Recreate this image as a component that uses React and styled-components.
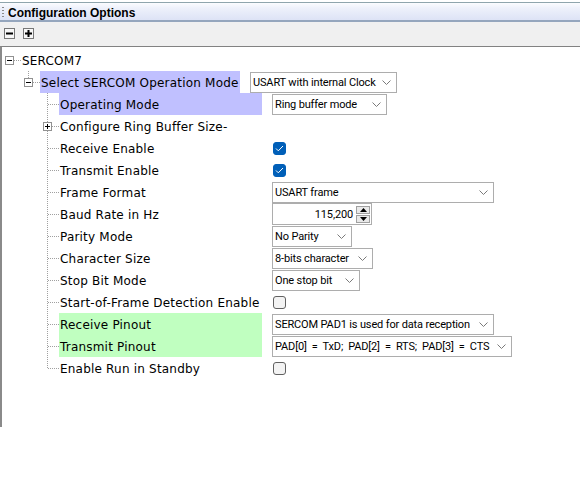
import React from "react";
import styled, { createGlobalStyle } from "styled-components";

const GlobalStyle = createGlobalStyle`
  html, body { margin: 0; padding: 0; background: #ffffff; }
  body { font-family: "DejaVu Sans", sans-serif; }
`;

const Window = styled.div`
  width: 580px;
  height: 500px;
  padding-top: 2px;
  box-sizing: border-box;
  background: #ffffff;
  overflow: hidden;
`;

const TitleBar = styled.div`
  height: 17px;
  border-top: 1px solid #8fa5ad;
  border-bottom: 2px solid #95a6bd;
  background: linear-gradient(#fbfcff 0%, #eef1fb 30%, #dde3f6 100%);
  display: flex;
  align-items: center;
  gap: 4px;
  padding-left: 2px;
`;

const Grip = styled.div`
  width: 2px;
  height: 11px;
  margin-top: 2px;
  background: repeating-linear-gradient(#8a8a8a 0 1px, transparent 1px 3px);
`;

const Title = styled.span`
  font-family: "Liberation Sans", Arial, sans-serif;
  font-weight: bold;
  font-size: 12px;
  line-height: 17px;
  padding-top: 3px;
  color: #000000;
`;

const Toolbar = styled.div`
  height: 24px;
  background: #f0f0f0;
  display: flex;
  align-items: center;
  gap: 8px;
  padding-left: 4px;
  padding-bottom: 1px;
  box-sizing: border-box;
`;

const ToolButton = styled.div`
  width: 11px;
  height: 11px;
  box-sizing: border-box;
  border: 1px solid #777777;
  background: #f7f7f7;
  display: flex;
  align-items: center;
  justify-content: center;
`;

const TreePanel = styled.div`
  height: 381px;
  box-sizing: border-box;
  border-top: 1px solid #828282;
  border-left: 2px solid #8a8a8a;
  background: #ffffff;
  padding-top: 2px;
`;

const Row = styled.div`
  height: 22px;
  display: flex;
  align-items: center;
`;

const GuideCell = styled.svg`
  flex: none;
  display: block;
  width: 19px;
  height: 22px;
`;

const Label = styled.div`
  flex: none;
  height: 22px;
  line-height: 20px;
  padding-top: 2px;
  box-sizing: border-box;
  padding-left: 1px;
  width: ${(p) => (p.$width ? `${p.$width}px` : "auto")};
  background: ${(p) =>
    p.$hl === "blue" ? "#c0c0ff" : p.$hl === "green" ? "#c0ffc0" : "transparent"};
  font-family: "DejaVu Sans", Verdana, sans-serif;
  font-size: 12px;
  letter-spacing: 0.2px;
  color: #000000;
  white-space: nowrap;
`;

const Value = styled.div`
  margin-left: 10px;
  display: flex;
  align-items: center;
`;

const Select = styled.div`
  width: ${(p) => p.$w}px;
  height: 21px;
  box-sizing: border-box;
  border: 1px solid #adadad;
  background: #ffffff;
  display: flex;
  align-items: center;
  justify-content: space-between;
  padding: 0 5px 0 2px;
  font-family: Roboto, "Liberation Sans", sans-serif;
  font-size: 11px;
  letter-spacing: -0.15px;
  word-spacing: ${(p) => (p.$wide ? "2.5px" : "0")};
  color: #000000;
  white-space: nowrap;
`;

const Spinner = styled.div`
  width: 100px;
  height: 22px;
  box-sizing: border-box;
  border: 1px solid #adadad;
  background: #ffffff;
  display: flex;
  align-items: center;
  justify-content: flex-end;
  gap: 3px;
  padding-right: 1px;
  font-family: Roboto, "Liberation Sans", sans-serif;
  font-size: 11px;
  letter-spacing: -0.15px;
  color: #000000;
`;

const SpinButtons = styled.div`
  display: flex;
  flex-direction: column;
  gap: 1px;
`;

const SpinButton = styled.div`
  width: 14px;
  height: 8px;
  box-sizing: border-box;
  border: 1px solid #a0a0a0;
  background: #e9e9e9;
  display: flex;
  align-items: center;
  justify-content: center;
`;

const CheckBox = styled.div`
  width: 13px;
  height: 13px;
  box-sizing: border-box;
  border-radius: 3px;
  border: 1px solid ${(p) => (p.$checked ? "#005fb8" : "#616161")};
  background: ${(p) => (p.$checked ? "#005fb8" : "#f3f3f3")};
  display: flex;
  align-items: center;
  justify-content: center;
  margin-left: 1px;
`;

const LINE = "#a0a0a0";

function Guide({ type }) {
  const dot = { stroke: LINE, strokeWidth: 1, strokeDasharray: "1 1", shapeRendering: "crispEdges" };
  const parts = [];
  if (type === "tee" || type === "teePlus") {
    parts.push(<line key="v" x1="7.5" y1="0" x2="7.5" y2="22" {...dot} />);
  }
  if (type === "elbow") {
    parts.push(<line key="v" x1="7.5" y1="0" x2="7.5" y2="12" {...dot} />);
  }
  if (type === "lastMinus") {
    parts.push(<line key="v" x1="7.5" y1="0" x2="7.5" y2="7" {...dot} />);
  }
  if (type === "tee" || type === "elbow") {
    parts.push(<line key="h" x1="8" y1="11.5" x2="19" y2="11.5" {...dot} />);
  }
  if (type === "teePlus" || type === "lastMinus" || type === "rootMinus") {
    parts.push(<line key="h" x1="12" y1="11.5" x2="19" y2="11.5" {...dot} />);
    parts.push(
      <rect key="b" x="3.5" y="7.5" width="8" height="8" fill="#ffffff" stroke="#919191" strokeWidth="1" shapeRendering="crispEdges" />
    );
    parts.push(<line key="m" x1="5" y1="11.5" x2="10" y2="11.5" stroke="#000000" strokeWidth="1" shapeRendering="crispEdges" />);
    if (type === "teePlus") {
      parts.push(<line key="p" x1="7.5" y1="9" x2="7.5" y2="14" stroke="#000000" strokeWidth="1" shapeRendering="crispEdges" />);
    }
  }
  return (
    <GuideCell viewBox="0 0 19 22" aria-hidden="true">
      {parts}
    </GuideCell>
  );
}

function Chevron() {
  return (
    <svg width="9" height="5" viewBox="0 0 9 5" aria-hidden="true" style={{ flex: "none" }}>
      <polyline points="0.5,0.5 4.5,4.5 8.5,0.5" fill="none" stroke="#7a7a7a" strokeWidth="1" />
    </svg>
  );
}

function Dropdown({ w, text, wide }) {
  return (
    <Select $w={w} $wide={wide}>
      <span>{text}</span>
      <Chevron />
    </Select>
  );
}

function Check({ checked }) {
  return (
    <CheckBox $checked={checked}>
      {checked && (
        <svg width="9" height="7" viewBox="0 0 9 7" aria-hidden="true">
          <polyline points="1,3.5 3.3,5.8 8,1" fill="none" stroke="#ffffff" strokeWidth="1" />
        </svg>
      )}
    </CheckBox>
  );
}

function BaudSpinner({ value }) {
  return (
    <Spinner>
      <span>{value}</span>
      <SpinButtons>
        <SpinButton>
          <svg width="7" height="4" viewBox="0 0 7 4" aria-hidden="true">
            <polygon points="3.5,0 7,4 0,4" fill="#000000" />
          </svg>
        </SpinButton>
        <SpinButton>
          <svg width="7" height="4" viewBox="0 0 7 4" aria-hidden="true">
            <polygon points="0,0 7,0 3.5,4" fill="#000000" />
          </svg>
        </SpinButton>
      </SpinButtons>
    </Spinner>
  );
}

const children = [
  { label: "Operating Mode", hl: "blue", type: "tee", value: { kind: "select", w: 115, text: "Ring buffer mode" } },
  { label: "Configure Ring Buffer Size-", type: "teePlus" },
  { label: "Receive Enable", type: "tee", value: { kind: "check", checked: true } },
  { label: "Transmit Enable", type: "tee", value: { kind: "check", checked: true } },
  { label: "Frame Format", type: "tee", value: { kind: "select", w: 222, text: "USART frame" } },
  { label: "Baud Rate in Hz", type: "tee", value: { kind: "spin", text: "115,200" } },
  { label: "Parity Mode", type: "tee", value: { kind: "select", w: 80, text: "No Parity" } },
  { label: "Character Size", type: "tee", value: { kind: "select", w: 101, text: "8-bits character" } },
  { label: "Stop Bit Mode", type: "tee", value: { kind: "select", w: 88, text: "One stop bit" } },
  { label: "Start-of-Frame Detection Enable", type: "tee", value: { kind: "check", checked: false } },
  { label: "Receive Pinout", hl: "green", type: "tee", value: { kind: "select", w: 222, text: "SERCOM PAD1 is used for data reception" } },
  { label: "Transmit Pinout", hl: "green", type: "tee", value: { kind: "select", w: 240, text: "PAD[0] = TxD; PAD[2] = RTS; PAD[3] = CTS", wide: true } },
  { label: "Enable Run in Standby", type: "elbow", value: { kind: "check", checked: false } },
];

function renderValue(v) {
  if (!v) return null;
  if (v.kind === "select") return <Dropdown w={v.w} text={v.text} wide={v.wide} />;
  if (v.kind === "check") return <Check checked={v.checked} />;
  if (v.kind === "spin") return <BaudSpinner value={v.text} />;
  return null;
}

export default function App() {
  return (
    <>
      <GlobalStyle />
      <Window>
        <TitleBar>
          <Grip />
          <Title>Configuration Options</Title>
        </TitleBar>
        <Toolbar>
          <ToolButton>
            <svg width="7" height="7" viewBox="0 0 7 7" aria-hidden="true">
              <rect x="0" y="2.5" width="7" height="2" fill="#000000" />
            </svg>
          </ToolButton>
          <ToolButton>
            <svg width="7" height="7" viewBox="0 0 7 7" aria-hidden="true">
              <rect x="0" y="2.5" width="7" height="2" fill="#000000" />
              <rect x="2.5" y="0" width="2" height="7" fill="#000000" />
            </svg>
          </ToolButton>
        </Toolbar>
        <TreePanel>
          <Row>
            <Guide type="rootMinus" />
            <Label>SERCOM7</Label>
          </Row>
          <Row>
            <Guide type="blank" />
            <Guide type="lastMinus" />
            <Label $hl="blue" $width={200}>Select SERCOM Operation Mode</Label>
            <Value>
              <Dropdown w={147} text="USART with internal Clock" />
            </Value>
          </Row>
          {children.map((c) => (
            <Row key={c.label}>
              <Guide type="blank" />
              <Guide type="blank" />
              <Guide type={c.type} />
              <Label $hl={c.hl} $width={203}>{c.label}</Label>
              {c.value && <Value>{renderValue(c.value)}</Value>}
            </Row>
          ))}
        </TreePanel>
      </Window>
    </>
  );
}
